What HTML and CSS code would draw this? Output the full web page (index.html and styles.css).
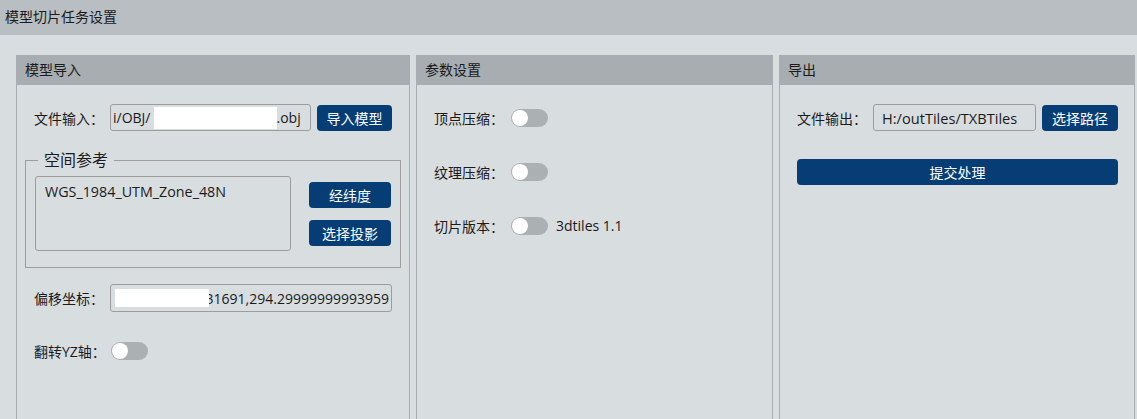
FILE: index.html
```html
<!DOCTYPE html>
<html lang="zh">
<head>
<meta charset="utf-8">
<title>模型切片任务设置</title>
<link rel="stylesheet" href="styles.css">
</head>
<body>
<div class="titlebar">模型切片任务设置</div>
<div class="main">
  <section class="panel panel-import">
    <div class="panel-head">模型导入</div>
    <div class="panel-body">
      <div class="row">
        <span class="label">文件输入：</span>
        <div class="field field-file"><span class="ftxt">i/OBJ/</span><span class="redact-inline"></span><span class="ftxt">.obj</span></div>
        <button class="btn btn-import">导入模型</button>
      </div>
      <fieldset class="group">
        <legend>空间参考</legend>
        <div class="group-inner">
          <div class="srs-box">WGS_1984_UTM_Zone_48N</div>
          <div class="srs-btns">
            <button class="btn btn-srs">经纬度</button>
            <button class="btn btn-srs">选择投影</button>
          </div>
        </div>
      </fieldset>
      <div class="row row-offset">
        <span class="label">偏移坐标：</span>
        <div class="field field-offset"><span class="ftxt">31691,294.29999999993959</span><span class="redact-over"></span></div>
      </div>
      <div class="row row-flip">
        <span class="label">翻转YZ轴：</span>
        <span class="toggle"><span class="knob"></span></span>
      </div>
    </div>
  </section>
  <section class="panel panel-params">
    <div class="panel-head">参数设置</div>
    <div class="panel-body">
      <div class="row">
        <span class="label">顶点压缩：</span>
        <span class="toggle"><span class="knob"></span></span>
      </div>
      <div class="row row-gap">
        <span class="label">纹理压缩：</span>
        <span class="toggle"><span class="knob"></span></span>
      </div>
      <div class="row row-gap">
        <span class="label">切片版本：</span>
        <span class="toggle"><span class="knob"></span></span>
        <span class="version">3dtiles 1.1</span>
      </div>
    </div>
  </section>
  <section class="panel panel-export">
    <div class="panel-head">导出</div>
    <div class="panel-body">
      <div class="row">
        <span class="label">文件输出：</span>
        <div class="field field-out"><span class="ftxt">H:/outTiles/TXBTiles</span></div>
        <button class="btn btn-path">选择路径</button>
      </div>
      <button class="btn btn-submit">提交处理</button>
    </div>
  </section>
</div>
</body>
</html>
```

FILE: styles.css
```css
html, body {
  margin: 0;
  padding: 0;
  overflow: hidden;
  height: 100%;
}
body {
  background: #d8dde0;
  font-family: "Open Sans", "Noto Sans CJK SC", sans-serif;
  font-size: 14px;
  color: #1b1b1b;
}
.titlebar {
  height: 35px;
  line-height: 34px;
  background: #b8bec1;
  padding-left: 5px;
  font-size: 14px;
}
.main {
  display: flex;
  gap: 6px;
  padding: 20px 2px 0 16px;
}
.panel {
  box-sizing: border-box;
  height: 364px;
  border: 1px solid #a7adb0;
  border-top: none;
  border-bottom: none;
  display: flex;
  flex-direction: column;
}
.panel-import { width: 394px; }
.panel-params { width: 357px; }
.panel-export { flex: 1; }
.panel-head {
  height: 30px;
  line-height: 30px;
  background: #a7adb0;
  margin: 0 -1px;
  padding-left: 9px;
  font-size: 14px;
}
.panel-body {
  padding: 19px 17px 0 17px;
  display: flex;
  flex-direction: column;
}
.panel-export .panel-body { padding-right: 16px; }
.row {
  display: flex;
  align-items: center;
  height: 27px;
}
.row-gap { margin-top: 27px; }
.label {
  width: 76px;
  flex: none;
  white-space: nowrap;
}
.field {
  box-sizing: border-box;
  height: 27px;
  border: 1px solid #9c9c9c;
  border-radius: 3px;
  display: flex;
  align-items: center;
  overflow: hidden;
  white-space: nowrap;
  position: relative;
}
.field-file {
  flex: 1;
  padding-left: 2px;
}
.redact-inline {
  display: inline-block;
  width: 123px;
  height: 22px;
  background: #ffffff;
  margin-left: 3px;
  flex: none;
}
.field-offset {
  flex: 1;
  justify-content: flex-end;
  padding-right: 2px;
  height: 28px;
}
.redact-over {
  position: absolute;
  left: 4px;
  top: 4px;
  width: 94px;
  height: 18px;
  background: #ffffff;
}
.field-out {
  flex: 1;
  padding-left: 8px;
  font-size: 14.6px;
}
.btn {
  font-family: "Open Sans", "Noto Sans CJK SC", sans-serif;
  font-size: 14px;
  color: #ffffff;
  background: #063d74;
  border: none;
  border-radius: 4px;
  height: 26px;
  padding: 0;
  cursor: pointer;
}
.btn-import {
  width: 75px;
  margin-left: 6px;
  flex: none;
}
.btn-path {
  width: 76px;
  margin-left: 6px;
  flex: none;
}
.btn-submit {
  margin-top: 28px;
  width: 100%;
}
.group {
  margin: 19px -9px 0 -9px;
  border: 1px solid #9e9e9e;
  padding: 6px 9px 16px 9px;
  min-width: 0;
}
.group legend {
  font-size: 16px;
  padding: 0 6px;
  margin-left: 3px;
  line-height: 20px;
}
.group-inner {
  display: flex;
  justify-content: space-between;
}
.srs-box {
  box-sizing: border-box;
  width: 256px;
  height: 75px;
  border: 1px solid #9c9c9c;
  border-radius: 3px;
  padding: 3px 9px;
  line-height: 24px;
  font-size: 14.3px;
}
.srs-btns {
  display: flex;
  flex-direction: column;
  gap: 12px;
  padding-top: 6px;
}
.btn-srs { width: 82px; }
.row-offset { margin-top: 16px; height: 28px; }
.row-flip { margin-top: 25px; }
.toggle {
  display: inline-block;
  width: 37px;
  height: 18px;
  border-radius: 9px;
  background: #abb0b3;
  position: relative;
  flex: none;
  margin-left: 1px;
}
.knob {
  position: absolute;
  left: 1px;
  top: 1px;
  width: 16px;
  height: 16px;
  border-radius: 50%;
  background: #ffffff;
}
.version {
  margin-left: 8px;
}
```
